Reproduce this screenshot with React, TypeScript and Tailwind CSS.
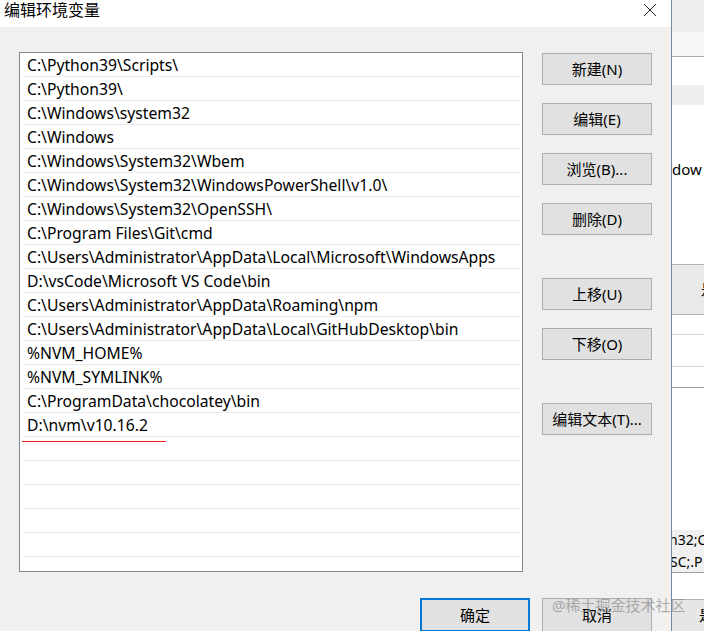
import React from 'react'

const paths = [
  'C:\\Python39\\Scripts\\',
  'C:\\Python39\\',
  'C:\\Windows\\system32',
  'C:\\Windows',
  'C:\\Windows\\System32\\Wbem',
  'C:\\Windows\\System32\\WindowsPowerShell\\v1.0\\',
  'C:\\Windows\\System32\\OpenSSH\\',
  'C:\\Program Files\\Git\\cmd',
  'C:\\Users\\Administrator\\AppData\\Local\\Microsoft\\WindowsApps',
  'D:\\vsCode\\Microsoft VS Code\\bin',
  'C:\\Users\\Administrator\\AppData\\Roaming\\npm',
  'C:\\Users\\Administrator\\AppData\\Local\\GitHubDesktop\\bin',
  '%NVM_HOME%',
  '%NVM_SYMLINK%',
  'C:\\ProgramData\\chocolatey\\bin',
  'D:\\nvm\\v10.16.2',
  '', '', '', '', '', '',
]

// 右侧按钮，mt 是和上一个按钮的间距
const buttons = [
  { label: '新建(N)', mt: 'mt-px' },
  { label: '编辑(E)', mt: 'mt-[18px]' },
  { label: '浏览(B)...', mt: 'mt-[18px]' },
  { label: '删除(D)', mt: 'mt-[18px]' },
  { label: '上移(U)', mt: 'mt-[43px]' },
  { label: '下移(O)', mt: 'mt-[18px]' },
  { label: '编辑文本(T)...', mt: 'mt-[43px]' },
]

const font = { fontFamily: '"Noto Sans", "Noto Sans CJK SC", sans-serif' }

function WinButton({ label, className = '' }: { label: string; className?: string }) {
  return (
    <div className={`flex h-[32px] w-[110px] items-center justify-center border border-[#adadad] bg-[#e1e1e1] text-[15px] text-black ${className}`}>
      {label}
    </div>
  )
}

export default function App() {
  return (
    <div className="relative flex h-[631px] w-[704px] overflow-hidden bg-white" style={font}>
      {/* 对话框 */}
      <div className="flex w-[671px] flex-none flex-col">
        <div className="flex h-[27px] flex-none items-start justify-between bg-white pr-[14px]">
          <span className="pl-[4px] text-[16px] leading-[21px] text-black">编辑环境变量</span>
          <svg width="14" height="14" viewBox="0 0 14 14" className="mt-[3px]">
            <path d="M1 1 L13 13 M13 1 L1 13" stroke="#222" strokeWidth="1" fill="none" />
          </svg>
        </div>

        <div className="flex flex-1 bg-[#f0f0f0]">
          <div className="flex flex-1 flex-col pl-[19px] pt-[25px]">
            <div className="flex">
              {/* 列表 */}
              <div className="relative h-[520px] w-[504px] flex-none overflow-hidden border border-[#828790] bg-white pl-[4px] pr-[2px]">
                {paths.map((p, i) => (
                  <div key={i} className="flex h-[24px] items-center whitespace-nowrap border-b border-[#ececec] pl-[3px] pt-[3px] text-[15.7px] leading-none text-black">
                    {p}
                  </div>
                ))}
                {/* 手画的红线 */}
                <div className="absolute left-[2px] top-[388px] h-px w-[144px] bg-[#ee1c1c]" />
              </div>

              <div className="ml-[19px] flex flex-col">
                {buttons.map((b) => (
                  <WinButton key={b.label} label={b.label} className={b.mt} />
                ))}
              </div>
            </div>

            <div className="mt-[26px] flex gap-[12px] pl-[401px]">
              <div className="flex h-[34px] w-[110px] items-center justify-center border-2 border-[#0078d7] bg-[#e1e1e1] text-[15px] text-black">
                确定
              </div>
              <WinButton label="取消" className="h-[34px]" />
            </div>
          </div>
          <div className="w-[9px] flex-none bg-[#f4f1ec]" />
        </div>
      </div>

      {/* 后面的窗口 */}
      <div className="flex w-[33px] flex-none flex-col overflow-hidden border-l border-[#6d8aa6] text-[15px] text-black">
        <div className="h-[32px] flex-none bg-[#eeeeee]" />
        <div className="h-[25px] flex-none border-b border-[#a9a9a9] bg-[#f6f6f6]" />
        <div className="h-[28px] flex-none bg-white" />
        <div className="h-[20px] flex-none bg-[#efefef]" />
        <div className="flex h-[159px] flex-none items-start bg-white pt-[54px]">
          <span className="whitespace-nowrap leading-[20px]">dow</span>
        </div>
        <div className="flex h-[51px] flex-none items-center justify-end overflow-hidden border-y border-[#b4b4b4] bg-[#e9e9e9]">
          <span className="mr-[-12px] whitespace-nowrap">是</span>
        </div>
        <div className="h-[20px] flex-none border-b border-[#d4d4d4] bg-white" />
        <div className="h-[32px] flex-none border-b border-[#d4d4d4] bg-white" />
        <div className="h-[21px] flex-none border-b border-[#a0a0a0] bg-white" />
        <div className="h-[142px] flex-none bg-white" />
        <div className="flex h-[43px] flex-none flex-col justify-center overflow-hidden border-b border-[#a0a0a0] bg-[#f0f0f0] text-[14px] leading-[22px]">
          <span className="ml-[-3px] whitespace-nowrap">n32;C</span>
          <span className="ml-[-2px] whitespace-nowrap">SC;.P</span>
        </div>
        <div className="h-[27px] flex-none border-b border-[#b4b4b4] bg-white" />
        <div className="flex flex-1 items-center justify-end overflow-hidden bg-[#e6e6e6]">
          <span className="mr-[-10px] whitespace-nowrap">是</span>
        </div>
      </div>

      {/* 水印 */}
      <div className="pointer-events-none absolute left-[552px] top-[594px] whitespace-nowrap text-[15px] text-[#8c8c8c]/70">
        @稀土掘金技术社区
      </div>
    </div>
  )
}
